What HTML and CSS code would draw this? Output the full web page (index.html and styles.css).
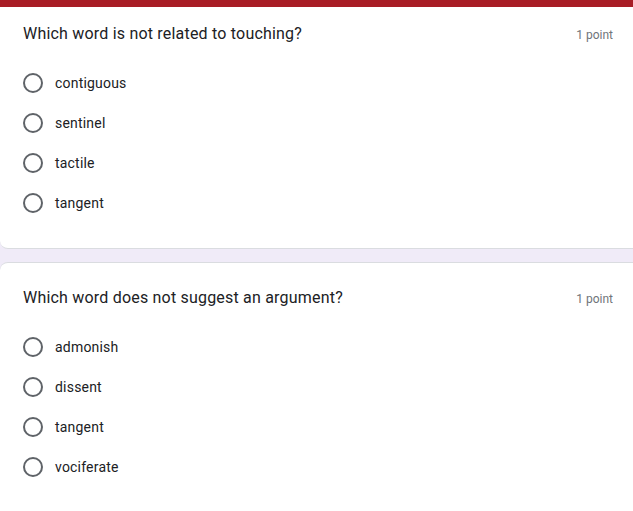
FILE: index.html
```html
<!DOCTYPE html>
<html>
<head>
<meta charset="utf-8">
<link rel="stylesheet" href="styles.css">
</head>
<body>
<div class="topbar"></div>
<div class="card first">
  <div class="qhead">
    <div class="qtitle">Which word is not related to touching?</div>
    <div class="points">1 point</div>
  </div>
  <div class="options">
    <div class="opt"><span class="radio"></span><span class="label">contiguous</span></div>
    <div class="opt"><span class="radio"></span><span class="label">sentinel</span></div>
    <div class="opt"><span class="radio"></span><span class="label">tactile</span></div>
    <div class="opt"><span class="radio"></span><span class="label">tangent</span></div>
  </div>
</div>
<div class="gap"></div>
<div class="card second">
  <div class="qhead">
    <div class="qtitle">Which word does not suggest an argument?</div>
    <div class="points">1 point</div>
  </div>
  <div class="options">
    <div class="opt"><span class="radio"></span><span class="label">admonish</span></div>
    <div class="opt"><span class="radio"></span><span class="label">dissent</span></div>
    <div class="opt"><span class="radio"></span><span class="label">tangent</span></div>
    <div class="opt"><span class="radio"></span><span class="label">vociferate</span></div>
  </div>
</div>
</body>
</html>
```
FILE: styles.css
```css
html, body {
  margin: 0;
  padding: 0;
  background: #f0ebf8;
  overflow: hidden;
  font-family: Roboto, "Liberation Sans", sans-serif;
}
.topbar {
  height: 7px;
  background: #a81c25;
}
.card {
  background: #fff;
  padding: 0 20px 0 23px;
  border-radius: 0 0 0 8px;
}
.card.first {
  padding-top: 15px;
  padding-bottom: 25px;
  border-bottom: 1px solid #dadce0;
}
.card.second {
  padding-top: 23px;
  padding-bottom: 30px;
  border-top: 1px solid #dadce0;
  border-radius: 8px 0 0 0;
}
.gap {
  height: 13px;
}
.qhead {
  display: flex;
  justify-content: space-between;
  align-items: center;
  height: 24px;
}
.qtitle {
  font-size: 16px;
  color: #202124;
  line-height: 24px;
  letter-spacing: 0.2px;
}
.points {
  font-size: 12px;
  color: #70757a;
  line-height: 24px;
  padding-top: 2px;
}
.options {
  margin-top: 17px;
  display: flex;
  flex-direction: column;
}
.opt {
  height: 40px;
  display: flex;
  align-items: center;
}
.radio {
  width: 16px;
  height: 16px;
  border: 2px solid #5f6368;
  border-radius: 50%;
  flex: none;
}
.label {
  margin-left: 12px;
  font-size: 14px;
  color: #202124;
  letter-spacing: 0.2px;
}
```
